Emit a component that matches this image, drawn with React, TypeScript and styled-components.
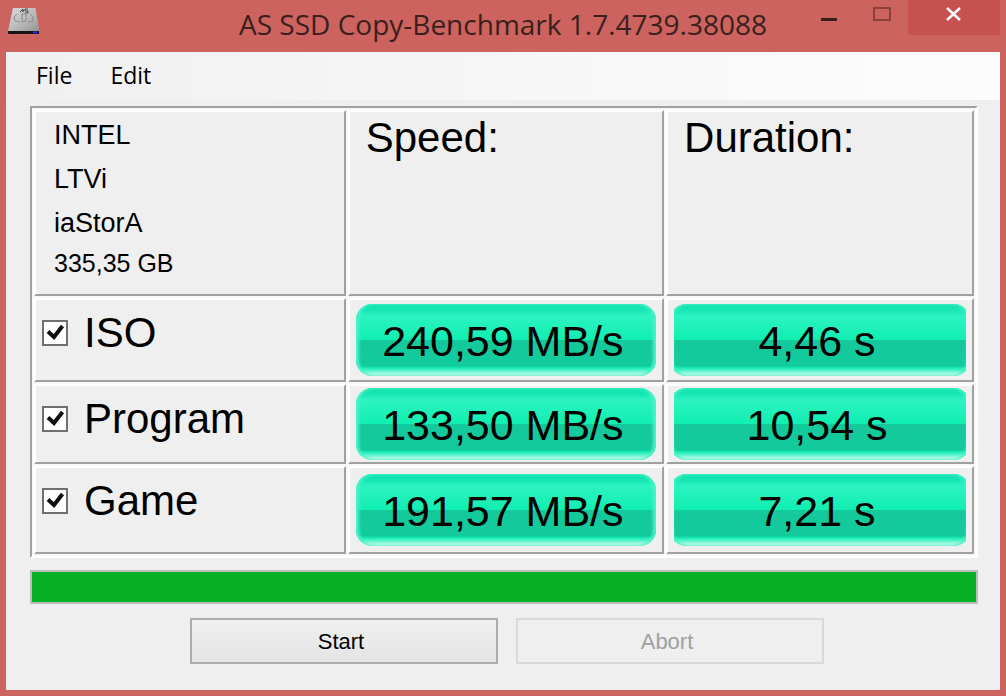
import React, { useState } from "react";
import styled, { createGlobalStyle } from "styled-components";

const GlobalStyle = createGlobalStyle`
  * { box-sizing: border-box; }
  body { margin: 0; background: #cc635f; }
`;

const Window = styled.div`
  min-height: 100vh;
  display: flex;
  flex-direction: column;
  padding: 0 6px 6px;
  background: #cc635f;
  color: #000;
  font-family: "Liberation Sans", Arial, sans-serif;
`;

const TitleBar = styled.header`
  display: grid;
  grid-template-columns: 180px 1fr 180px;
  height: 52px;
`;

const AppIcon = styled.svg`
  margin: 6px 0 0 2px;
`;

const Title = styled.h1`
  margin: 0;
  text-align: center;
  font: 400 28px/48px "Open Sans", "Segoe UI", sans-serif;
  color: #3a1f1d;
  white-space: nowrap;
`;

const Controls = styled.div`
  display: flex;
  justify-content: flex-end;
  align-items: flex-start;
`;

const ControlButton = styled.button<{ $close?: boolean }>`
  display: flex;
  justify-content: center;
  width: ${(p) => (p.$close ? 92 : 54)}px;
  height: 35px;
  padding: 0;
  border: 0;
  background: ${(p) => (p.$close ? "#c75050" : "transparent")};
`;

const Client = styled.main`
  flex: 1;
  background: #efefef;
`;

const MenuBar = styled.nav`
  display: flex;
  align-items: flex-start;
  gap: 38px;
  height: 48px;
  padding-left: 30px;
  background: linear-gradient(90deg, #f0f0f0, #fdfdfd);
`;

const MenuItem = styled.button`
  padding: 0;
  border: 0;
  background: none;
  font: 400 23px/46px "Open Sans", "Segoe UI", sans-serif;
  color: #000;
`;

const Body = styled.div`
  padding: 6px 22px 26px 24px;
`;

const Results = styled.table`
  width: 100%;
  table-layout: fixed;
  border-collapse: separate;
  border-spacing: 2px;
  border: 2px solid;
  border-color: #a0a0a0 #fff #fff #a0a0a0;
  background: #f8f8f8;
`;

const Column = styled.col<{ $share: number }>`
  width: ${(p) => p.$share}%;
`;

const Row = styled.tr<{ $height: number }>`
  height: ${(p) => p.$height}px;
`;

const Cell = styled.td`
  padding: 0 6px;
  border: 2px solid;
  border-color: #fff #a0a0a0 #a0a0a0 #fff;
  background: #efefef;
`;

const HeadCell = styled(Cell)`
  padding: 1px 16px;
  vertical-align: top;
  text-align: left;
  font-weight: 400;
  font-size: 42px;
  line-height: 50px;
`;

const InfoLine = styled.div<{ $last?: boolean }>`
  padding-left: 2px;
  font-size: ${(p) => (p.$last ? 25 : 27)}px;
  line-height: ${(p) => (p.$last ? 36 : 44)}px;
`;

const TestCell = styled(Cell)`
  padding: 8px 6px;
  vertical-align: top;
`;

const TestLabel = styled.label`
  display: flex;
  align-items: center;
  gap: 16px;
  font-size: 42px;
  font-weight: 400;
  line-height: 50px;
`;

const CheckWrap = styled.span`
  display: grid;
  width: 26px;
  height: 26px;

  > * { grid-area: 1 / 1; }
`;

const CheckBox = styled.input`
  appearance: none;
  width: 26px;
  height: 26px;
  margin: 0;
  border: 2px solid #707070;
  background: #fff;
`;

const CheckMark = styled.svg`
  z-index: 1;
  pointer-events: none;
`;

const PillClip = styled.div`
  overflow: hidden;
`;

const Pill = styled.div<{ $bleed?: boolean }>`
  height: 72px;
  margin: 0 ${(p) => (p.$bleed ? -4 : 0)}px;
  padding-right: 6px;
  border-radius: 16px;
  text-align: center;
  font-size: 43px;
  line-height: 74px;
  background: linear-gradient(
    #12e0ae 0,
    #16e6b4 6px,
    #2df3c1 12px,
    #12efb2 34px,
    #12efb2 36px,
    #14c99b 36px,
    #12cb9c 62px,
    #16edb4 64px,
    #5ff5cd 67px,
    #b4f7e4 70px,
    #dcf4ec 72px
  );
  box-shadow: inset 3px 0 3px #4af3c8, inset -3px 0 3px #4af3c8;
`;

const Progress = styled.div`
  height: 34px;
  margin-top: 12px;
  border: 2px solid #bcbcbc;
  background: #e6e6e6;
`;

const ProgressFill = styled.div`
  height: 100%;
  background: #06b025;
`;

const Actions = styled.div`
  display: flex;
  justify-content: center;
  gap: 18px;
  margin-top: 14px;
  padding-left: 6px;
`;

const ActionButton = styled.button`
  width: 308px;
  height: 46px;
  padding: 2px 6px 0 0;
  border: 2px solid #acacac;
  background: linear-gradient(#f0f0f0, #e4e4e4);
  font: 400 22px/40px "Liberation Sans", Arial, sans-serif;
  color: #000;

  &:disabled {
    border-color: #d9d9d9;
    background: #efefef;
    color: #a0a0a0;
  }
`;

const tests = [
  { name: "ISO", speed: "240,59 MB/s", duration: "4,46 s", height: 84 },
  { name: "Program", speed: "133,50 MB/s", duration: "10,54 s", height: 80 },
  { name: "Game", speed: "191,57 MB/s", duration: "7,21 s", height: 88 },
];

function Test({ name, speed, duration, height }: (typeof tests)[number]) {
  const [checked, setChecked] = useState(true);
  return (
    <Row $height={height}>
      <TestCell as="th" scope="row">
        <TestLabel>
          <CheckWrap>
            <CheckBox type="checkbox" checked={checked} onChange={() => setChecked(!checked)} />
            {checked && (
              <CheckMark width="26" height="26" viewBox="0 0 26 26" aria-hidden="true">
                <path d="M6 11.5 12 17 20.5 6" fill="none" stroke="#111" strokeWidth="4" />
              </CheckMark>
            )}
          </CheckWrap>
          {name}
        </TestLabel>
      </TestCell>
      <Cell>
        <Pill>{speed}</Pill>
      </Cell>
      <Cell>
        <PillClip>
          <Pill $bleed>{duration}</Pill>
        </PillClip>
      </Cell>
    </Row>
  );
}

export default function App() {
  return (
    <Window>
      <GlobalStyle />
      <TitleBar>
        <AppIcon width="32" height="30" viewBox="0 0 32 30" aria-hidden="true">
          <defs>
            <linearGradient id="drive" x1="0" y1="0" x2="1" y2="1">
              <stop offset="0" stopColor="#dcdcdc" />
              <stop offset="0.6" stopColor="#b4b4b4" />
              <stop offset="1" stopColor="#909090" />
            </linearGradient>
          </defs>
          <path d="M5 2h22.500l4 23v1H0v-1z" fill="url(#drive)" />
          <path d="M0 25h31v2q0 1-1 1H2q-2 0-2-1z" fill="#151515" />
          <path d="M25 26.500h4" stroke="#2c2cff" strokeWidth="2" />
          <path d="M12 6l3-3v3M14 5h2M20 3h-3v2h3v2h-3" fill="none" stroke="#4a4a4a" />
          <path d="M9 8l-3 3 1 4 5 1M14 8v8l4-1V8zM22 8l3 3v4l-5 1" fill="none" stroke="#8c8c8c" />
        </AppIcon>
        <Title>AS SSD Copy-Benchmark 1.7.4739.38088</Title>
        <Controls>
          <ControlButton aria-label="Minimize">
            <svg width="54" height="35" viewBox="0 0 54 35">
              <path d="M21 18h16v3H21z" fill="#38201a" />
            </svg>
          </ControlButton>
          <ControlButton aria-label="Maximize">
            <svg width="54" height="35" viewBox="0 0 54 35">
              <path d="M20 8h16v12H20z" fill="none" stroke="#8a403d" strokeWidth="2" />
            </svg>
          </ControlButton>
          <ControlButton $close aria-label="Close">
            <svg width="92" height="35" viewBox="0 0 92 35">
              <path d="M39 8l13 12M52 8L39 20" stroke="#fff" strokeWidth="2.4" />
            </svg>
          </ControlButton>
        </Controls>
      </TitleBar>
      <Client>
        <MenuBar>
          <MenuItem>File</MenuItem>
          <MenuItem>Edit</MenuItem>
        </MenuBar>
        <Body>
          <Results>
            <colgroup>
              <Column $share={33.3} />
              <Column $share={33.8} />
              <Column $share={32.9} />
            </colgroup>
            <thead>
              <Row $height={186}>
                <HeadCell>
                  <InfoLine>INTEL</InfoLine>
                  <InfoLine>LTVi</InfoLine>
                  <InfoLine>iaStorA</InfoLine>
                  <InfoLine $last>335,35 GB</InfoLine>
                </HeadCell>
                <HeadCell as="th" scope="col">Speed:</HeadCell>
                <HeadCell as="th" scope="col">Duration:</HeadCell>
              </Row>
            </thead>
            <tbody>
              {tests.map((t) => (
                <Test key={t.name} {...t} />
              ))}
            </tbody>
          </Results>
          <Progress role="progressbar" aria-label="Benchmark progress" aria-valuenow={100}>
            <ProgressFill />
          </Progress>
          <Actions>
            <ActionButton>Start</ActionButton>
            <ActionButton disabled>Abort</ActionButton>
          </Actions>
        </Body>
      </Client>
    </Window>
  );
}
